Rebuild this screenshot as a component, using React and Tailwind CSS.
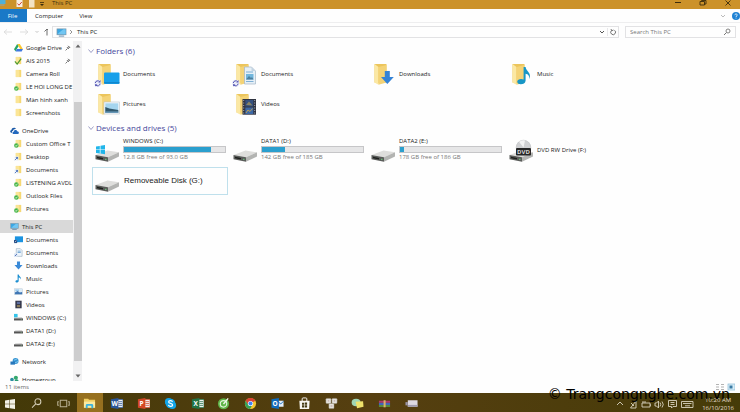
import React from 'react';

const Monitor = () => (
  <svg viewBox="0 0 12 10" className="w-full h-full">
    <rect x="1" y="1" width="10" height="6.5" fill="#3aa7e4" stroke="#7d97a8" strokeWidth=".8" />
    <path d="M1.5 6.8 8 1.4h2.6v5.6z" fill="#72c6f2" />
    <path d="M3 9h6" stroke="#5d88a8" />
  </svg>
);

const SmallFolder = ({ badge }) => (
  <svg viewBox="0 0 10 10" className="w-full h-full">
    <path d="M2 1h6v8H2z" fill="#f6d873" />
    <path d="M2 1h3l1 1v7H2z" fill="#fbe596" />
    {badge === 'green' && <circle cx="2.6" cy="7.2" r="2.5" fill="#46b648" />}
    {badge === 'green' && <path d="m1.4 7.2.9 1 1.6-1.9" fill="none" stroke="#fff" strokeWidth=".8" />}
    {badge === 'sync' && <rect x="0" y="5" width="5" height="5" fill="#f4f7fb" />}
    {badge === 'sync' && <path d="M1 9 4 6M2 6h2v2" fill="none" stroke="#3461b4" strokeWidth=".9" />}
    {badge === 'check' && <path d="m1 6 2.5 3L8 3" fill="none" stroke="#4c9b31" strokeWidth="1.3" />}
  </svg>
);

const SmallDrive = ({ windows }) => (
  <svg viewBox="0 0 10 10" className="w-full h-full">
    {windows && <path d="M0 1h4v4H0z" fill="#36c3e8" />}
    <path d="m1.5 5 7-.2L10 6H0z" fill="#c4c4c4" />
    <path d="M0 6h10v2.3H0z" fill="#555" />
    <path d="M7.5 7.2h1" stroke="#8fe29d" strokeWidth=".6" />
  </svg>
);

const smallIcons = {
  gdrive: (
    <svg viewBox="0 0 10 10" className="w-full h-full">
      <path d="M3.5 1h3L10 7H7z" fill="#fbc62f" />
      <path d="M3.5 1 5 3.6 1.7 9.2 0 7z" fill="#25a566" />
      <path d="M3.2 6.8H10L8.5 9.4H1.7z" fill="#3f79e0" />
    </svg>
  ),
  folder: <SmallFolder />,
  green: <SmallFolder badge="green" />,
  sync: <SmallFolder badge="sync" />,
  check: <SmallFolder badge="check" />,
  onedrive: (
    <svg viewBox="0 0 10 10" className="w-full h-full">
      <path d="M1.3 7.5C-.3 7 0 4.700 1.600 4.500 1.800 1.800 5.500 1 6.700 3.400 5 3 3.600 4 3.400 5.300 2 5.500 2 7 2.700 7.500z" fill="#1c5aa8" />
      <path d="M4 9c-1.600-.2-1.500-2.500.1-2.600C4.200 4 7.500 3.600 8 5.800c2.300 0 2.500 3 .6 3.200z" fill="#2368bd" />
    </svg>
  ),
  pc: <Monitor />,
  screen: (
    <svg viewBox="0 0 10 10" className="w-full h-full">
      <rect x="1" y="1.500" width="9" height="6.500" fill="#1b93e0" />
      <path d="M0 5.500h3.500V9H0z" fill="#2b4f86" />
      <path d="M1 8 2.700 6.300" stroke="#fff" strokeWidth=".7" />
    </svg>
  ),
  doc: (
    <svg viewBox="0 0 10 10" className="w-full h-full">
      <path d="M2.500.7h4.500l2 2v6.600h-6.500z" fill="#eef5fb" stroke="#8ba3b8" strokeWidth=".6" />
      <path d="M4 3.500h3.500M4 5h3.500" stroke="#4f8fc8" strokeWidth=".8" />
      <path d="M0 6h4v3.700H0z" fill="#dce7f6" />
      <path d="M1 9 3.200 6.800" stroke="#3257a8" strokeWidth=".9" />
    </svg>
  ),
  down: (
    <svg viewBox="0 0 10 10" className="w-full h-full">
      <path d="M3.300.5h3.400V4.500H9.500L5 9.500.5 4.500h2.800z" fill="#3a8ad8" />
    </svg>
  ),
  music: (
    <svg viewBox="0 0 10 10" className="w-full h-full">
      <path d="M4 .5h1.200C5.500 2.500 8.500 3 7.400 6 7.200 4.500 6 4 5.200 4v3.800C5 9.800 1.700 10 1.600 8.200 1.600 7 3 6.600 4 7z" fill="#1b8ed0" />
    </svg>
  ),
  picture: (
    <svg viewBox="0 0 10 10" className="w-full h-full">
      <rect x=".5" y="2" width="9" height="6.500" fill="#dcecf7" stroke="#b5c3cf" strokeWidth=".5" />
      <path d="M1 8V6l3-1.500L6.500 6 9 5.500V8z" fill="#3f76b4" />
      <path d="M1.500 3.500h4" stroke="#6db4e8" />
    </svg>
  ),
  video: (
    <svg viewBox="0 0 10 10" className="w-full h-full">
      <rect x="1.500" y=".8" width="7" height="8.400" fill="#34374a" />
      <path d="M3.200 2h3.600v2.500H3.200z" fill="#5b6c9e" />
      <path d="M3.200 5.500h3.600V8H3.200z" fill="#8a7b5a" />
    </svg>
  ),
  windrive: <SmallDrive windows />,
  drive: <SmallDrive />,
  network: (
    <svg viewBox="0 0 10 10" className="w-full h-full">
      <circle cx="6.200" cy="4.500" r="3.300" fill="#3593d2" />
      <path d="M4.500 3.500 8 2.200M5.500 6.500 9 5" stroke="#9fd8f4" strokeWidth=".8" />
      <path d="M.5 5h5v3.500h-5z" fill="#2777bb" />
    </svg>
  ),
  homegroup: (
    <svg viewBox="0 0 10 10" className="w-full h-full">
      <circle cx="2.200" cy="5" r="2" fill="#2b8ea0" />
      <circle cx="6.500" cy="3" r="2.300" fill="#35a86d" />
      <circle cx="7.300" cy="7" r="2.300" fill="#2c9b76" />
    </svg>
  ),
};

const treeGroups = [
  {
    items: [
      { icon: 'gdrive', label: 'Google Drive', pinned: true },
      { icon: 'check', label: 'AIS 2015', pinned: true },
      { icon: 'folder', label: 'Camera Roll' },
      { icon: 'green', label: 'LE HOI LONG DE' },
      { icon: 'folder', label: 'Màn hình xanh' },
      { icon: 'folder', label: 'Screenshots' },
    ],
  },
  {
    root: { icon: 'onedrive', label: 'OneDrive' },
    items: [
      { icon: 'green', label: 'Custom Office T' },
      { icon: 'sync', label: 'Desktop' },
      { icon: 'sync', label: 'Documents' },
      { icon: 'green', label: 'LISTENING AVDL' },
      { icon: 'green', label: 'Outlook Files' },
      { icon: 'green', label: 'Pictures' },
    ],
  },
  {
    root: { icon: 'pc', label: 'This PC', active: true },
    items: [
      { icon: 'screen', label: 'Documents' },
      { icon: 'doc', label: 'Documents' },
      { icon: 'down', label: 'Downloads' },
      { icon: 'music', label: 'Music' },
      { icon: 'picture', label: 'Pictures' },
      { icon: 'video', label: 'Videos' },
      { icon: 'windrive', label: 'WINDOWS (C:)' },
      { icon: 'drive', label: 'DATA1 (D:)' },
      { icon: 'drive', label: 'DATA2 (E:)' },
    ],
  },
  { root: { icon: 'network', label: 'Network' }, items: [] },
  { root: { icon: 'homegroup', label: 'Homegroup' }, items: [] },
];

const SyncBadge = () => (
  <g>
    <circle cx="3.700" cy="22.300" r="3.600" fill="#e9ebf8" />
    <path d="M1.300 22a2.500 2.500 0 0 1 4.300-1.400M6.100 22.600a2.500 2.500 0 0 1-4.300 1.500" fill="none" stroke="#5759b4" strokeWidth="1" />
    <path d="M6.500 19v2.400H4.200zM1 25.600v-2.300h2.300z" fill="#5759b4" />
  </g>
);

const folderOverlays = {
  desktop: (
    <g>
      <rect x="10" y="11.500" width="15.500" height="11.500" rx="1" fill="#18a0ea" />
      <path d="M10 21.800h15.500" stroke="#0f7cc0" />
      <SyncBadge />
    </g>
  ),
  documents: (
    <g>
      <path d="M12.500 6h7l4 4v13h-11z" fill="#e6f0f7" stroke="#a3b6c6" strokeWidth=".7" />
      <path d="M19.500 6v4h4z" fill="#c3d4e2" />
      <path d="M14 11h7M14 20.500h7.500" stroke="#7fb0d6" />
      <path d="M14 13h7.500v5.500H14z" fill="#72b7dd" />
      <path d="m14 18.500 3-3.500 2 2 1-1 1.500 2.500z" fill="#4b7f9f" />
      <SyncBadge />
    </g>
  ),
  downloads: <path d="M14.800 10h5v6h4L17.300 23l-6.300-7h3.800z" fill="#3583d6" />,
  music: (
    <path d="M15.600 6h2c.3 4.500 6.300 5.200 3.800 12.300.2-4-1.600-5.300-3.800-5.600v7c-.2 4.200-8.200 4.800-8.400 1 .1-2.700 3.800-3.400 6.400-2.300z" fill="#1796c6" />
  ),
  pictures: (
    <g>
      <rect x="10" y="11" width="15.500" height="12" fill="#f7fafc" stroke="#b9c2ca" strokeWidth=".6" />
      <path d="M11.300 12.300h13v9.400h-13z" fill="#a5d5ef" />
      <path d="m11.300 16 4 1.500 9 1.500v2.700h-13z" fill="#31586d" />
      <path d="M11.300 20.500h13v1.200h-13z" fill="#6fa3c7" />
    </g>
  ),
  videos: (
    <g>
      <rect x="10.500" y="8" width="13.500" height="15.700" fill="#2f3340" />
      <path d="M13.300 9h8v6.500h-8z" fill="#35507e" />
      <path d="M13.300 16.500h8v6.500h-8z" fill="#3c68a6" />
      <path d="m14 14 3-3.500 3.500 4z" fill="#8a8462" />
      <path d="m14 22 2-3 2 1.500 2.500-3" fill="none" stroke="#bd9c54" />
      <path d="M11.700 9v14M22.700 9v14" stroke="#a6aab3" strokeDasharray="1 1.500" />
    </g>
  ),
};

const FolderIcon = ({ kind }) => (
  <svg viewBox="0 0 28 26" className="w-7 h-[26px] shrink-0">
    <path d="M4.500 3h12v18.500L8 22.500l-3.500-1z" fill="#ecc55c" />
    <path d="M4.500 3 8.500 6v17.700L4.500 21.500z" fill="#fbe8a4" />
    <path d="M8.500 6 16.500 4v17.500l-8 2.200z" fill="#f4d377" />
    {folderOverlays[kind]}
  </svg>
);

const DriveIcon = ({ kind }) => (
  <svg viewBox="0 0 28 26" className="w-7 h-[26px] shrink-0">
    <path d="m1.500 17 12-4.500L25 14.300 14 19.200z" fill="#dededc" />
    <path d="m1.500 17 12.500 2.200v4.600L1.500 21.200z" fill="#5b5d5b" />
    <path d="m14 19.200 11-4.900v4.200l-11 5.300z" fill="#b3b4b2" />
    <path d="m3 18.800 6 1.100v1.500l-6-1.200z" fill="#1f211f" />
    <path d="M11 21.300h1.500" stroke="#6fd07f" />
    {kind === 'windows' && (
      <path d="m2 8.500 3.800-.6v3.500H2zM6.500 7.800 11 7v4.400H6.500zM2 12h3.800v3.500L2 15zM6.500 12H11v4.300l-4.500-.7z" fill="#20b5ea" />
    )}
    {kind === 'dvd' && (
      <g>
        <circle cx="15.500" cy="9.500" r="7.300" fill="#cfd0d2" stroke="#b5b6b8" strokeWidth=".5" />
        <path d="M15.500 9.500 11 3.700a7.300 7.300 0 0 1 6-1.300z" fill="#f2f2f2" />
        <rect x="8" y="10" width="15" height="7.500" rx="1" fill="#252525" />
        <text x="15.500" y="15.800" fontSize="6" fontWeight="700" textAnchor="middle" fill="#d8d8d8">DVD</text>
      </g>
    )}
  </svg>
);

const folders = [
  { label: 'Documents', kind: 'desktop' },
  { label: 'Documents', kind: 'documents' },
  { label: 'Downloads', kind: 'downloads' },
  { label: 'Music', kind: 'music' },
  { label: 'Pictures', kind: 'pictures' },
  { label: 'Videos', kind: 'videos' },
];

const drives = [
  { label: 'WINDOWS (C:)', kind: 'windows', used: 86, info: '12.8 GB free of 93.0 GB' },
  { label: 'DATA1 (D:)', used: 23, info: '142 GB free of 185 GB' },
  { label: 'DATA2 (E:)', used: 4, info: '178 GB free of 186 GB' },
  { label: 'DVD RW Drive (F:)', kind: 'dvd' },
];

const OfficeTile = ({ color, letter }) => (
  <g>
    <rect x="7" y="2.500" width="7" height="9" fill="#f1f1f1" stroke={color} strokeWidth=".8" />
    <path d="M9 5h4M9 7h4M9 9h4" stroke={color} strokeWidth=".8" />
    <path d="m1 2.500 8-1.500v12l-8-1.500z" fill={color} />
    <text x="5" y="9.500" fontSize="7" fontWeight="700" textAnchor="middle" fill="#fff">{letter}</text>
  </g>
);

const taskbarApps = [
  {
    name: 'Search',
    art: (
      <g fill="none" stroke="#d5cfb8" strokeWidth="1.100">
        <circle cx="8.500" cy="5" r="3.200" />
        <path d="m6.200 7.300-4 4.200" />
      </g>
    ),
  },
  {
    name: 'Task View',
    art: <path d="M3.500 3.500h7v7h-7zM2 5H.8v4H2M12 5h1.200v4H12" fill="none" stroke="#b9b193" strokeWidth="1.100" />,
  },
  {
    name: 'File Explorer',
    active: true,
    art: (
      <g>
        <path d="M1 2h4.500l1 1H13v8.500H1z" fill="#f2cf62" />
        <path d="M1 5h12v6.500H1z" fill="#fbe9a0" />
        <path d="M3 12V9q0-1.500 1.500-1.500h5Q11 7.500 11 9v3H9v-2.500H5V12z" fill="#3cb2dc" />
      </g>
    ),
  },
  { name: 'Word', art: <OfficeTile color="#2a5699" letter="W" /> },
  { name: 'PowerPoint', art: <OfficeTile color="#d24726" letter="P" /> },
  {
    name: 'Skype',
    art: (
      <g>
        <circle cx="5" cy="5" r="4" fill="#12a5e8" />
        <circle cx="9" cy="9" r="4" fill="#12a5e8" />
        <circle cx="7" cy="7" r="5.200" fill="#12a5e8" />
        <path d="M9.200 5.200C8.500 3.300 4.900 3.600 5 5.400c.1 1.900 4.300 1.200 4.300 3.200 0 1.800-3.700 2-4.600.1" fill="none" stroke="#fff" strokeWidth="1.300" />
      </g>
    ),
  },
  { name: 'Excel', art: <OfficeTile color="#217346" letter="X" /> },
  {
    name: 'Coc Coc',
    art: (
      <g>
        <circle cx="7" cy="7.300" r="6" fill="#5fb548" />
        <circle cx="7" cy="7.300" r="3.500" fill="none" stroke="#e2f3da" strokeWidth="1.300" />
        <path d="m7 7.500 5-6" stroke="#f2f8ee" strokeWidth="1.500" />
      </g>
    ),
  },
  {
    name: 'Chrome',
    art: (
      <g>
        <circle cx="7" cy="7" r="6" fill="#f4c430" />
        <path d="M1.800 4A6 6 0 0 1 12.200 4L7 7z" fill="#dc4437" />
        <path d="M7 4h5.200a6 6 0 0 0-10.400 0L4.500 8.500z" fill="#dc4437" />
        <path d="M1.800 4A6 6 0 0 0 6.500 13L9 8.500H4.500z" fill="#36a159" />
        <circle cx="7" cy="7" r="2.800" fill="#fff" />
        <circle cx="7" cy="7" r="2.200" fill="#4285f4" />
      </g>
    ),
  },
  {
    name: 'Outlook',
    art: (
      <g>
        <rect x="7" y="4" width="6.500" height="6.500" fill="#e5effa" />
        <path d="m7 4.500 3.500 3 3-3" fill="none" stroke="#0f6cbd" />
        <path d="m.5 2.500 8-1.500v12l-8-1.500z" fill="#0f6cbd" />
        <text x="4.500" y="9.500" fontSize="7" fontWeight="700" textAnchor="middle" fill="#fff">O</text>
      </g>
    ),
  },
  {
    name: 'Store',
    art: (
      <g>
        <path d="M4.500 4.500V2q0-1 1-1h3q1 0 1 1v2.500" fill="none" stroke="#fff" />
        <path d="M1.500 4h11L12 13H2z" fill="#f7f7f0" />
        <path d="M4.300 6.200h2.300v2.200H4.300zM7.300 6h2.500v2.400H7.300zM4.300 9h2.300v2.200H4.300zM7.300 9h2.500v2.400H7.300z" fill="#453c14" />
      </g>
    ),
  },
  {
    name: 'Keyboard',
    art: (
      <g fill="#e5e2dc" stroke="#9c9688" strokeWidth=".5">
        <rect x="1" y="1.500" width="5.500" height="5.500" rx="1" />
        <rect x="7.500" y="1.500" width="5.500" height="5.500" rx="1" />
        <rect x="4.200" y="7" width="5.500" height="5.500" rx="1" />
        <path d="M3 4.200h1.500M9.500 4.200H11M6 9.700h2" stroke="#8c4f52" />
      </g>
    ),
  },
  {
    name: 'Notes',
    art: (
      <g>
        <ellipse cx="5.500" cy="6" rx="4.800" ry="4" fill="#9fd6b4" />
        <path d="m5 5 8-.5.5 6-7 1.500z" fill="#efe26a" />
      </g>
    ),
  },
  {
    name: 'WinRAR',
    art: (
      <g>
        <path d="M1 4h12v2.300H1z" fill="#b03a6a" />
        <path d="M1 6.300h12v2.300H1z" fill="#4066b8" />
        <path d="M1 8.600h12v2.200H1z" fill="#5a8a3a" />
        <path d="M6 3.500h2.200v7.600H6z" fill="#d9b26a" />
      </g>
    ),
  },
  {
    name: 'Removable drive',
    art: (
      <g>
        <path d="M3 3.500h10.500v7H3z" fill="#ded9e2" />
        <path d="M.5 5.500H3v3.500H.5z" fill="#9b95a8" />
        <path d="M3 8.500h10.500v2H3z" fill="#a19cae" />
      </g>
    ),
  },
];

const TreeItem = ({ icon, label, pinned, active, root }) => (
  <a
    href="#"
    className={`flex h-[13px] items-center gap-[3px] whitespace-nowrap ${root ? 'pl-[10px]' : 'pl-[14px]'} ${active ? 'bg-[#d9d9d9]' : ''}`}
  >
    <span className="h-[9px] w-[9px] shrink-0">{smallIcons[icon]}</span>
    <span className="flex-1">{label}</span>
    {pinned && (
      <svg viewBox="0 0 6 6" className="mr-0.5 h-[6px] w-[6px] shrink-0">
        <path d="M3 .8 5.200 3M2 2.200 3.800 4M3.800 1.500 2.600 2.800M4.500 2.300 3.200 3.500M2.500 3.500.6 5.400" fill="none" stroke="#666" strokeWidth=".9" />
      </svg>
    )}
  </a>
);

const SectionTitle = ({ children }) => (
  <h2 className="flex h-[14px] items-center gap-0.5 text-[8px] text-[#45479b]">
    <svg viewBox="0 0 6 6" className="-ml-1 h-[6px] w-[6px]">
      <path d="m.5 1.500 2.500 3 2.500-3" fill="none" stroke="#8587b8" strokeWidth=".8" />
    </svg>
    {children}
  </h2>
);

const TitleBar = () => (
  <header className="flex h-[9px] shrink-0 items-start justify-between bg-[#cc922a] leading-[7px] text-[#3d2c0c]">
    <div className="flex items-start">
      <svg viewBox="0 0 48 8" className="h-[8px] w-[48px]">
        <path d="M0 0h5.500v4H0z" fill="#4fb0d6" />
        <path d="M0 5h4.500" stroke="#8fa9a8" />
        <path d="M16.500 0h6v7h-6z" fill="#f8eee2" />
        <path d="m17.500 3.500 1.500 1.700L21.800 2" fill="none" stroke="#d1473b" />
        <path d="M29 0h5.500v7.500H29z" fill="#f3e3c4" />
        <path d="M40 2.500h4" stroke="#3d2c0c" strokeWidth=".8" />
        <path d="M40 4h4l-2 2z" fill="#3d2c0c" />
      </svg>
      <h1 className="pl-1">This PC</h1>
    </div>
    <div className="flex gap-[15px] pr-[7px]">
      <button aria-label="Minimize" className="h-[7px] w-[10px]">
        <svg viewBox="0 0 10 7" className="h-full w-full"><path d="M2 2.500h6" stroke="#3d2c0c" /></svg>
      </button>
      <button aria-label="Restore" className="h-[7px] w-[10px]">
        <svg viewBox="0 0 10 7" className="h-full w-full">
          <path d="M2 1.500h4.500V5H2zM3.500 1.500V.5H8V4H6.500" fill="none" stroke="#3d2c0c" strokeWidth=".9" />
        </svg>
      </button>
      <button aria-label="Close" className="h-[7px] w-[10px]">
        <svg viewBox="0 0 10 7" className="h-full w-full"><path d="m2.500.5 5 5m0-5-5 5" stroke="#3d2c0c" strokeWidth=".9" /></svg>
      </button>
    </div>
  </header>
);

const Ribbon = () => (
  <div className="flex h-[14px] shrink-0 items-stretch justify-between border-b border-[#eeeeef]">
    <div className="flex items-center">
      <button className="h-full w-[27px] bg-[#1a79c7] pr-0.5 text-white">File</button>
      <button className="px-2">Computer</button>
      <button className="px-2">View</button>
    </div>
    <div className="flex items-center gap-[6px]">
      <svg viewBox="0 0 6 6" className="h-[6px] w-[6px]">
        <path d="m1 2 2 2 2-2" fill="none" stroke="#aaa" strokeWidth=".8" />
      </svg>
      <button aria-label="Help" className="h-[8px] w-[8px]">
        <svg viewBox="0 0 8 8" className="h-full w-full">
          <circle cx="4" cy="4" r="4" fill="#1f82d4" />
          <path d="M2.800 3.200C2.900 1.500 5.400 1.600 5.200 3.100 5.100 4 4 4 4 5M4 5.700v.8" fill="none" stroke="#fff" strokeWidth=".8" />
        </svg>
      </button>
    </div>
  </div>
);

const AddressBar = () => (
  <div className="flex h-[18px] shrink-0 items-center gap-[6px] pr-1">
    <svg viewBox="0 0 48 10" className="h-[10px] w-[48px] shrink-0" fill="none">
      <path d="M4 5h8M7 2.500 4 5l3 2.500M20 5h8M25 2.500 28 5l-3 2.500" stroke="#dedede" />
      <path d="m35.500 4 1.500 1.500L38.500 4" stroke="#b8b8b8" strokeWidth=".8" />
      <path d="M47 8.500V2M44.500 4.500 47 2M44.500 4.500" stroke="#6d6d6d" />
      <path d="m47 2 1 1" stroke="#6d6d6d" />
    </svg>
    <div className="-ml-0.5 flex h-3 flex-1 items-center border border-[#e2e2e4] pl-[3px]">
      <span className="h-[9px] w-[11px]"><Monitor /></span>
      <svg viewBox="0 0 4 6" className="ml-0.5 h-[6px] w-[4px]">
        <path d="m1 1 2 2-2 2" fill="none" stroke="#777" strokeWidth=".8" />
      </svg>
      <span className="flex-1 pl-1">This PC</span>
      <svg viewBox="0 0 20 8" className="h-[8px] w-[20px]" fill="none">
        <path d="m2 3 2 2 2-2" stroke="#555" />
        <path d="M9.500 0v8" stroke="#e2e2e4" strokeWidth=".8" />
        <path d="M16.500 2.300A2.400 2.400 0 1 1 13.500 2.500M13 1l.7 1.800L15.500 2" stroke="#666" strokeWidth=".9" />
      </svg>
    </div>
    <label className="flex h-3 w-[111px] items-center border border-[#e2e2e4] px-1">
      <input type="text" aria-label="Search This PC" placeholder="Search This PC" className="min-w-0 flex-1 bg-transparent placeholder:text-[#777] outline-none" />
      <svg viewBox="0 0 8 8" className="h-[8px] w-[8px]">
        <circle cx="5" cy="3" r="2" fill="none" stroke="#777" strokeWidth=".9" />
        <path d="M3.500 4.500 1 7" stroke="#777" />
      </svg>
    </label>
  </div>
);

const Sidebar = () => (
  <aside className="flex shrink-0">
    <nav className="flex w-[73px] flex-col gap-[5px] overflow-hidden">
      {treeGroups.map((group, i) => (
        <div key={i} className="shrink-0">
          {group.root && <TreeItem {...group.root} root />}
          {group.items.map((item, j) => <TreeItem key={j} {...item} />)}
        </div>
      ))}
    </nav>
    <div className="flex w-[9px] flex-col items-center bg-[#f1f1f2]">
      <svg viewBox="0 0 6 6" className="mt-0.5 h-[6px] w-[6px] shrink-0"><path d="m.5 4.500 2.500-3 2.500 3z" fill="#666" /></svg>
      <div className="mt-[53px] mb-[12px] w-[8px] flex-1 bg-[#cdcdce]" />
      <svg viewBox="0 0 6 6" className="mb-0.5 h-[6px] w-[6px] shrink-0"><path d="m.5 1.500 2.500 3 2.500-3z" fill="#666" /></svg>
    </div>
  </aside>
);

const Content = () => (
  <main className="min-w-0 flex-1 overflow-hidden pt-[3px] pl-[10px]">
    <SectionTitle>Folders (6)</SectionTitle>
    <div className="grid grid-cols-[repeat(auto-fill,136px)] gap-x-0.5 pt-px">
      {folders.map((folder, i) => (
        <div key={i} className="flex h-[30px] items-center gap-px pl-0.5">
          <FolderIcon kind={folder.kind} />
          {folder.label}
        </div>
      ))}
    </div>

    <div className="pt-0.5">
      <SectionTitle>Devices and drives (5)</SectionTitle>
    </div>
    <div className="grid grid-cols-[repeat(auto-fill,136px)] gap-x-0.5 gap-y-0.5 pt-0.5">
      {drives.map(drive => (
        <div key={drive.label} className="flex h-[28px] items-center gap-px pl-0.5">
          <DriveIcon kind={drive.kind} />
          {drive.info ? (
            <div className="self-start leading-[8px]">
              <p>{drive.label}</p>
              <div
                role="progressbar"
                aria-label={drive.label}
                aria-valuenow={drive.used}
                className="mt-px h-[7px] w-[103px] border border-[#c6c6c8] bg-[#e6e6e7]"
              >
                <div className="h-full bg-[#2b9fce]" style={{ width: `${drive.used}%` }} />
              </div>
              <p className="text-[#777]">{drive.info}</p>
            </div>
          ) : (
            <p className="-mt-0.5">{drive.label}</p>
          )}
        </div>
      ))}
      <div className="flex h-[28px] items-center gap-px border border-[#bfe0ec] pl-px font-['Liberation_Sans',sans-serif] text-[8px]">
        <DriveIcon />
        <p className="pl-px">Removeable Disk (G:)</p>
      </div>
    </div>
  </main>
);

const Taskbar = () => (
  <footer className="flex h-[19px] shrink-0 items-stretch justify-between bg-linear-to-r from-[#433908] via-[#563f10] to-[#453b08]">
    <div className="flex">
      <button aria-label="Start" className="w-[23px] pt-0.5 pl-[5px]">
        <svg viewBox="0 0 10 10" className="h-[10px] w-[10px]">
          <path d="m0 1.500 4.500-.7v3.900H0zM5 .7 10 0v4.700H5zM0 5.300h4.500v3.900L0 8.500zM5 5.300h5V10l-5-.7z" fill="#f3f1e6" />
        </svg>
      </button>
      <div className="grid w-[402px] grid-cols-15">
        {taskbarApps.map(app => (
          <button key={app.name} aria-label={app.name} className={`flex items-center justify-center pt-0.5 ${app.active ? 'bg-[#96701f]' : ''}`}>
            <svg viewBox="0 0 14 14" className="h-[13px] w-[13px]">{app.art}</svg>
          </button>
        ))}
      </div>
    </div>
    <div className="flex items-center gap-2 pt-0.5 pr-[6px] text-[#e3dfcd]">
      <svg viewBox="0 0 80 10" className="h-[10px] w-[80px]" fill="none" stroke="#d8d3be" strokeWidth=".9">
        <path d="m3 6 3-3 3 3" />
        <path d="M16.500 9 22 2v7zM17 4l3 3" />
        <path d="M28 4h8v4h-8zM36.500 5.300v1.500M29 2v2M31 2v2" />
        <path d="M41 4v3h1.500l2 2V2l-2 2zM46 3.500q1.500 2 0 4M48 2.500q2.500 3 0 6" />
        <path d="M54.500 1.500h8v6H59L57.500 9V7.500h-3zM56.500 3.500h4M56.500 5.500h4" />
        <path d="M67.500 2.500h11.500v6H67.500zM69 4.500h8.500M71 6.800h5" />
      </svg>
      <div className="text-center leading-[8px]">
        <p>10:20 AM</p>
        <p>16/10/2016</p>
      </div>
    </div>
  </footer>
);

const App = () => (
  <div className="relative flex h-screen flex-col overflow-hidden bg-[#fefefe] font-['Open_Sans',sans-serif] text-[6px] leading-[8px] text-[#222]">
    <TitleBar />
    <Ribbon />
    <AddressBar />
    <div className="flex min-h-0 flex-1">
      <Sidebar />
      <Content />
    </div>
    <div className="flex h-3 shrink-0 items-center justify-between px-[5px] text-[#666]">
      <p>11 items</p>
      <svg viewBox="0 0 20 8" className="h-[8px] w-[20px]">
        <path d="M1 1.500h3M1 4h3M1 6.500h3M6 1.500h3M6 4h3M6 6.500h3" stroke="#aaa" strokeWidth=".9" />
        <rect x="13" y="1" width="7" height="6" fill="#d9edf7" stroke="#8bbcd6" strokeWidth=".7" />
        <path d="M14.500 2.500h3v3h-3z" fill="#397ba5" />
      </svg>
    </div>
    <Taskbar />
    <p className="absolute right-[10px] bottom-[9px] font-['DejaVu_Sans',sans-serif] text-[14px] leading-[18px] text-black">
      © Trangcongnghe.com.vn
    </p>
  </div>
);

export default App;
